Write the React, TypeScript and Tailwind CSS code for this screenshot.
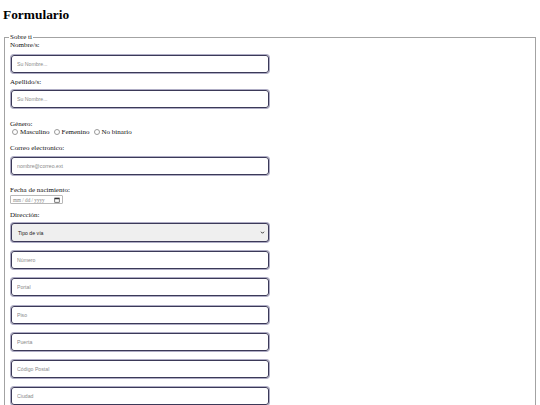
import React from 'react';

const serif = { fontFamily: '"Liberation Serif", "Times New Roman", serif' };

const campos = ['Número', 'Portal', 'Piso', 'Puerta', 'Código Postal', 'Ciudad', 'Provincia'];

const Campo: React.FC<{ placeholder: string; className?: string }> = ({ placeholder, className }) => (
    <input
        type="text"
        placeholder={placeholder}
        className={`block w-[258px] h-[18px] ml-[1px] border border-[#3b3958] shadow-[0_0_0_1px_#aeacc4] rounded-[3px] pl-[5px] text-[5.2px] font-['Liberation_Sans',Arial,sans-serif] placeholder:text-[#8a8a8a] outline-none ${className || ''}`}
    />
);

const Radio: React.FC<{ label: string }> = ({ label }) => (
    <span className="inline-flex items-center">
        <span className="inline-block w-[6px] h-[6px] rounded-full border border-[#9a9a9a] ml-[2px] mr-[2px]"></span>
        <span>{label}</span>
    </span>
);

const App: React.FC = () => {
    return (
        <div className="px-[4px] text-[#111] bg-white min-h-[405px] overflow-hidden" style={serif}>
            <h1 className="mt-[8px] ml-[-1px] text-[13.4px] leading-[14px] font-bold text-black">Formulario</h1>
            <fieldset className="mt-[11px] w-[532px] border border-[#a3a3a3] pl-[5px] pb-[20px] text-[7px] leading-[8px]">
                <legend className="px-[1px] ml-[-1px] text-[7px] leading-[8px] text-[#111]">Sobre ti</legend>

                <label className="block">Nombre/s:</label>
                <Campo placeholder="Su Nombre..." className="mt-[6px]" />

                <label className="block mt-[5px]">Apellido/s:</label>
                <Campo placeholder="Su Nombre..." className="mt-[4px]" />

                <div className="mt-[12px]">Género:</div>
                <div className="flex items-center gap-[2px]">
                    <Radio label="Masculino" />
                    <Radio label="Femenino" />
                    <Radio label="No binario" />
                </div>

                <label className="block mt-[8px]">Correo electronico:</label>
                <Campo placeholder="nombre@correo.ext" className="mt-[5px]" />

                <label className="block mt-[11px]">Fecha de nacimiento:</label>
                <div className="mt-[1px] w-[53px] h-[9px] border border-[#b8b8b8] rounded-[1px] flex items-center justify-between px-[2px] text-[5.2px] text-[#888]">
                    <span>mm / dd / yyyy</span>
                    <svg width="6" height="6" viewBox="0 0 12 12">
                        <rect x="1.5" y="2" width="9" height="8.5" fill="none" stroke="#333" strokeWidth="1.3" />
                        <rect x="1.5" y="2" width="9" height="2.5" fill="#333" />
                    </svg>
                </div>

                <label className="block mt-[7px]">Dirección:</label>
                <div className="mt-[4px] ml-[1px] w-[258px] h-[19px] border border-[#3b3958] shadow-[0_0_0_1px_#aeacc4] rounded-[3px] bg-[#efefef] flex items-center justify-between pl-[6px] pr-[3px] text-[5.2px] text-[#222]" style={{ fontFamily: '"Liberation Sans", Arial, sans-serif' }}>
                    <span>Tipo de vía</span>
                    <svg width="5" height="5" viewBox="0 0 10 10">
                        <path d="M2 3.5 L5 6.5 L8 3.5" fill="none" stroke="#222" strokeWidth="1.8" />
                    </svg>
                </div>

                {campos.map((c, i) => (
                    <Campo key={c} placeholder={c} className={i === 0 ? 'mt-[9px]' : 'mt-[9.3px]'} />
                ))}
            </fieldset>
        </div>
    );
};

export default App;
